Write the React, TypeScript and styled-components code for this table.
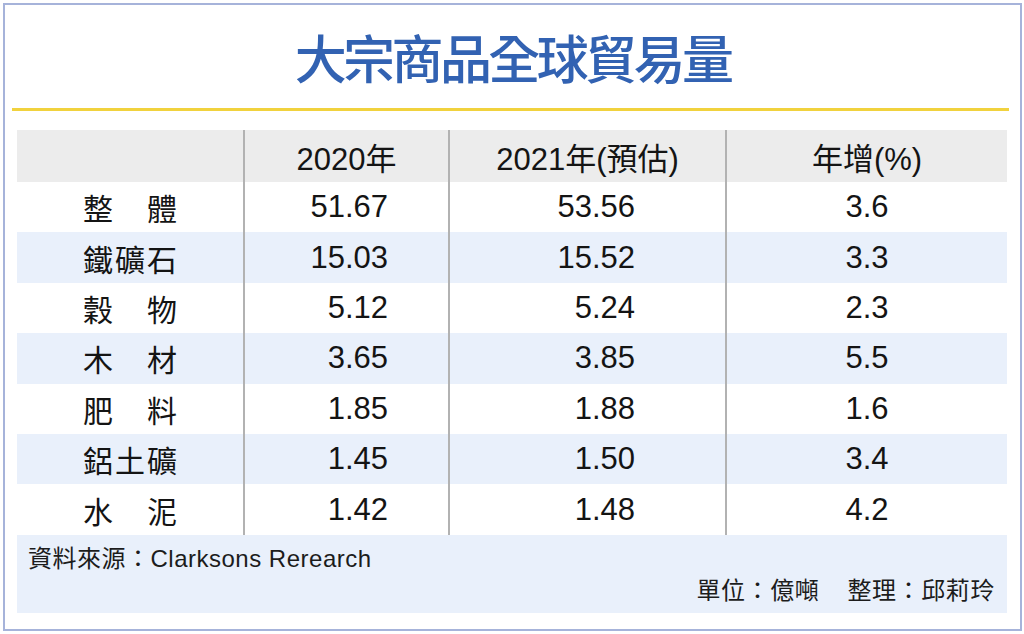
import styled, { createGlobalStyle } from "styled-components";

const GlobalStyle = createGlobalStyle`
  html, body {
    margin: 0;
    padding: 0;
    background: #ffffff;
  }
  body {
    font-family: "Liberation Sans", "Noto Sans CJK TC", sans-serif;
  }
`;

const Frame = styled.div`
  box-sizing: border-box;
  width: 1019px;
  height: 628px;
  margin: 3px 0 0 3px;
  border: 2px solid #a6b3da;
  background: #ffffff;

  display: flex;
  flex-direction: column;
`;

const TitleBar = styled.div`
  height: 103px;

  display: flex;
  justify-content: center;
  align-items: center;
`;

const Title = styled.h1`
  margin: 0;

  color: #3262b2;
  font-family: "Noto Sans CJK TC", sans-serif;
  font-size: 52px;
  font-weight: 500;
  letter-spacing: -3.6px;
  line-height: 1;
`;

const Rule = styled.div`
  height: 3px;
  margin: 0 11px 0 7px;
  background: #f1d23e;
`;

const Table = styled.div`
  width: 990px;
  margin: 19px 0 0 12px;

  display: flex;
  flex-direction: column;
`;

const Row = styled.div<{ $bg: string; $height: number }>`
  height: ${props => props.$height}px;
  background: ${props => props.$bg};

  display: grid;
  grid-template-columns: 226px 205px 277px 282px;
`;

const Cell = styled.div<{ $align: "center" | "right"; $pad?: number; $divider?: boolean }>`
  box-sizing: border-box;
  height: 100%;
  padding-right: ${props => props.$pad ?? 0}px;
  border-left: ${props => (props.$divider ? "2px solid #b2b2b2" : "none")};

  display: flex;
  align-items: center;
  justify-content: ${props => (props.$align === "right" ? "flex-end" : "center")};

  color: #141414;
  font-family: "Liberation Sans", "Noto Sans CJK TC", sans-serif;
  font-size: 31px;
`;

const Label = styled.div`
  width: 94px;

  display: flex;
  justify-content: space-between;

  color: #141414;
  font-family: "Noto Sans CJK TC", sans-serif;
  font-size: 30px;
  line-height: 1;
`;

const Footer = styled.div`
  width: 990px;
  height: 78px;
  margin-left: 12px;
  padding: 7px 12px 0 11px;
  box-sizing: border-box;
  background: #e9f0fb;

  display: flex;
  flex-direction: column;
`;

const Source = styled.div`
  height: 30px;

  display: flex;
  align-items: center;

  color: #1c1c1c;
  font-size: 24px;
  letter-spacing: 0.5px;
`;

const Credits = styled.div`
  height: 34px;

  display: flex;
  justify-content: flex-end;
  align-items: center;
  gap: 28px;

  color: #1c1c1c;
  font-family: "Noto Sans CJK TC", sans-serif;
  font-size: 24px;
  letter-spacing: 0.6px;
`;

interface Item {
  name: string;
  y2020: string;
  y2021: string;
  growth: string;
}

const items: Item[] = [
  { name: "整體", y2020: "51.67", y2021: "53.56", growth: "3.6" },
  { name: "鐵礦石", y2020: "15.03", y2021: "15.52", growth: "3.3" },
  { name: "穀物", y2020: "5.12", y2021: "5.24", growth: "2.3" },
  { name: "木材", y2020: "3.65", y2021: "3.85", growth: "5.5" },
  { name: "肥料", y2020: "1.85", y2021: "1.88", growth: "1.6" },
  { name: "鋁土礦", y2020: "1.45", y2021: "1.50", growth: "3.4" },
  { name: "水泥", y2020: "1.42", y2021: "1.48", growth: "4.2" },
];

const App = (): JSX.Element => {
  return (
    <>
      <GlobalStyle />
      <Frame>
        <TitleBar>
          <Title>大宗商品全球貿易量</Title>
        </TitleBar>
        <Rule />
        <Table>
          <Row $bg="#ececec" $height={52}>
            <Cell $align="center" />
            <Cell $align="center" $divider>2020年</Cell>
            <Cell $align="center" $divider>2021年(預估)</Cell>
            <Cell $align="center" $divider>年增(%)</Cell>
          </Row>
          {items.map((item, i) => (
            <Row key={item.name} $bg={i % 2 === 1 ? "#e9f0fb" : "#ffffff"} $height={50.4}>
              <Cell $align="center">
                <Label>
                  {item.name.split("").map(ch => (
                    <span key={ch}>{ch}</span>
                  ))}
                </Label>
              </Cell>
              <Cell $align="right" $pad={60} $divider>{item.y2020}</Cell>
              <Cell $align="right" $pad={90} $divider>{item.y2021}</Cell>
              <Cell $align="center" $divider>{item.growth}</Cell>
            </Row>
          ))}
        </Table>
        <Footer>
          <Source>資料來源：Clarksons Rerearch</Source>
          <Credits>
            <span>單位：億噸</span>
            <span>整理：邱莉玲</span>
          </Credits>
        </Footer>
      </Frame>
    </>
  );
};

export default App;
